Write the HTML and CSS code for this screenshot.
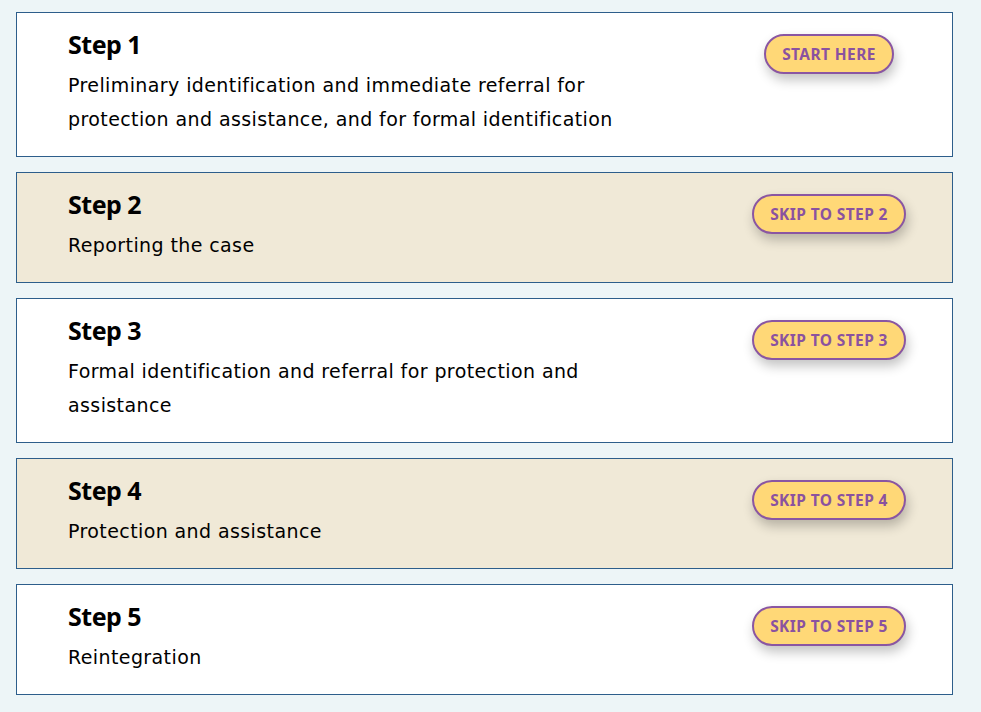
FILE: index.html
```html
<!DOCTYPE html>
<html lang="en">
<head>
  <meta charset="UTF-8">
  <title>Steps</title>
  <link rel="stylesheet" href="styles.css">
</head>
<body>

<div class="steps">
  <div class="step">
    <div class="step-text">
      <h3>Step 1</h3>
      <p>Preliminary identification and immediate referral for protection and assistance, and for formal identification</p>
    </div>
    <div class="step-action"><a class="btn" href="#">Start here</a></div>
  </div>

  <div class="step alt">
    <div class="step-text">
      <h3>Step 2</h3>
      <p>Reporting the case</p>
    </div>
    <div class="step-action"><a class="btn" href="#">Skip to step 2</a></div>
  </div>

  <div class="step">
    <div class="step-text">
      <h3>Step 3</h3>
      <p>Formal identification and referral for protection and assistance</p>
    </div>
    <div class="step-action"><a class="btn" href="#">Skip to step 3</a></div>
  </div>

  <div class="step alt">
    <div class="step-text">
      <h3>Step 4</h3>
      <p>Protection and assistance</p>
    </div>
    <div class="step-action"><a class="btn" href="#">Skip to step 4</a></div>
  </div>

  <div class="step">
    <div class="step-text">
      <h3>Step 5</h3>
      <p>Reintegration</p>
    </div>
    <div class="step-action"><a class="btn" href="#">Skip to step 5</a></div>
  </div>
</div>

</body>
</html>
```

FILE: styles.css
```css
body { margin: 0; background: #edf5f7; font-family: "DejaVu Sans", sans-serif; color: #000; }
.steps { padding: 12px 28px 16px 16px; display: flex; flex-direction: column; gap: 15px; }
.step { display: flex; background: #fff; border: 1px solid #2d5e8b; padding: 15px 0 20px 51px; }
.step.alt { background: #f0e9d7; }
.step-text { flex: 1; max-width: 590px; }
.step-text h3 { margin: 0 0 8px; font-family: "Noto Sans", sans-serif; font-size: 25px; line-height: 32px; font-weight: 700; letter-spacing: -0.5px; }
.step-text p { margin: 0; font-size: 19px; line-height: 34px; letter-spacing: 0.4px; }
.step-action { width: 200px; margin-left: auto; margin-right: 23px; display: flex; justify-content: center; align-items: flex-start; padding-top: 6px; }
.btn { display: inline-block; background: #ffd877; border: 2px solid #8a56a2; border-radius: 20px; color: #8a52a0; font-family: "Noto Sans", sans-serif; font-weight: 700; font-size: 15.5px; line-height: 20px; letter-spacing: 0.4px; padding: 8px 16px; text-transform: uppercase; text-decoration: none; box-shadow: 2px 6px 12px rgba(0,0,0,0.24); }
```
